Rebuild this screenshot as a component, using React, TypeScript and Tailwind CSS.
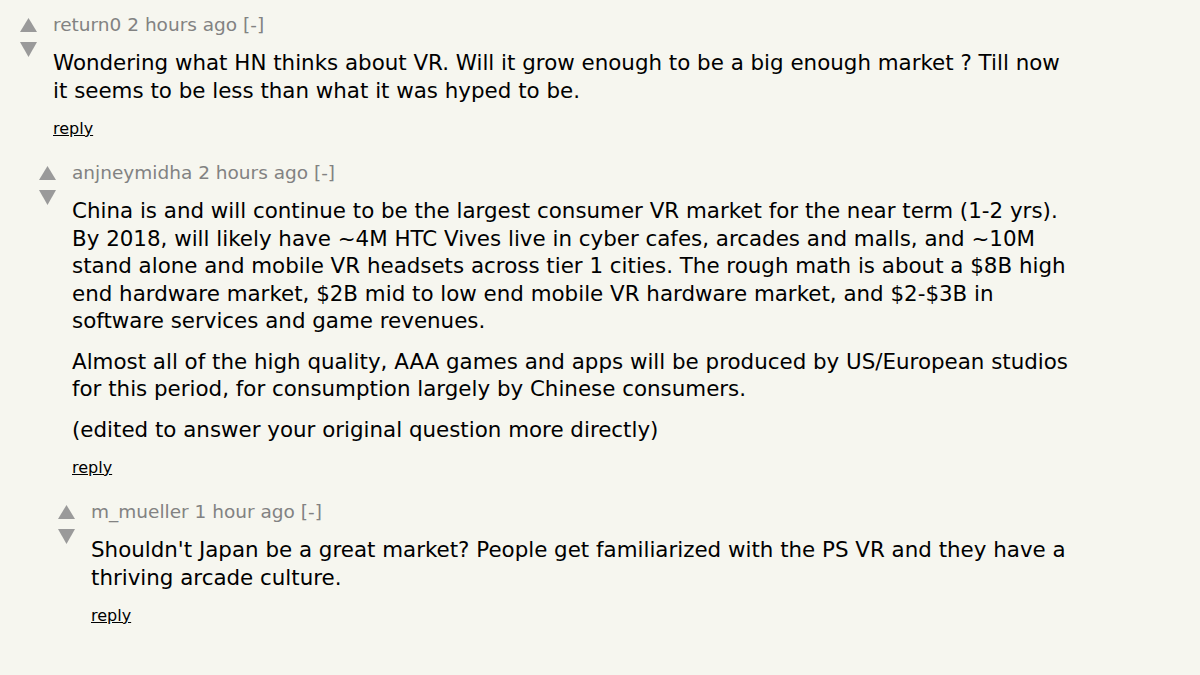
type CommentData = {
	user: string
	age: string
	paragraphs: string[]
	indent: string
}

const comments: CommentData[] = [
	{
		user: "return0",
		age: "2 hours ago",
		indent: "pl-[20px]",
		paragraphs: [
			"Wondering what HN thinks about VR. Will it grow enough to be a big enough market ? Till now it seems to be less than what it was hyped to be.",
		],
	},
	{
		user: "anjneymidha",
		age: "2 hours ago",
		indent: "pl-[39px]",
		paragraphs: [
			"China is and will continue to be the largest consumer VR market for the near term (1-2 yrs). By 2018, will likely have ~4M HTC Vives live in cyber cafes, arcades and malls, and ~10M stand alone and mobile VR headsets across tier 1 cities. The rough math is about a $8B high end hardware market, $2B mid to low end mobile VR hardware market, and $2-$3B in software services and game revenues.",
			"Almost all of the high quality, AAA games and apps will be produced by US/European studios for this period, for consumption largely by Chinese consumers.",
			"(edited to answer your original question more directly)",
		],
	},
	{
		user: "m_mueller",
		age: "1 hour ago",
		indent: "pl-[58px]",
		paragraphs: [
			"Shouldn't Japan be a great market? People get familiarized with the PS VR and they have a thriving arcade culture.",
		],
	},
]

function VoteArrows() {
	return (
		<div className="flex w-[33px] flex-shrink-0 flex-col pt-[5px]">
			<svg width="17" height="14" viewBox="0 0 17 14">
				<polygon points="8.5,0 17,14 0,14" fill="#9a9a9a" />
			</svg>
			<svg width="17" height="15" viewBox="0 0 17 15" className="mt-[10px]">
				<polygon points="0,0 17,0 8.5,15" fill="#9a9a9a" />
			</svg>
		</div>
	)
}

function Comment(props: { comment: CommentData }) {
	const c = props.comment
	return (
		<div className={`flex ${c.indent}`}>
			<VoteArrows />
			<div className="min-w-0 flex-1">
				<div className="text-[18.5px] leading-[24px] text-[#828282]">
					{c.user} {c.age} [-]
				</div>
				<div className="mt-[12px] space-y-[13px] text-[21.4px] leading-[27.5px] text-black">
					{c.paragraphs.map((p, i) => (
						<p key={i}>{p}</p>
					))}
				</div>
				<div className="mt-[15px] text-[16px] leading-[20px]">
					<span className="text-black underline">reply</span>
				</div>
			</div>
		</div>
	)
}

export default function App() {
	return (
		<div
			className="min-h-screen w-[1200px] bg-[#f6f6ef] pt-[13px]"
			style={{ fontFamily: '"DejaVu Sans", Verdana, sans-serif' }}
		>
			<div className="w-[1070px] space-y-[22px]">
				{comments.map((c) => (
					<Comment key={c.user} comment={c} />
				))}
			</div>
		</div>
	)
}
